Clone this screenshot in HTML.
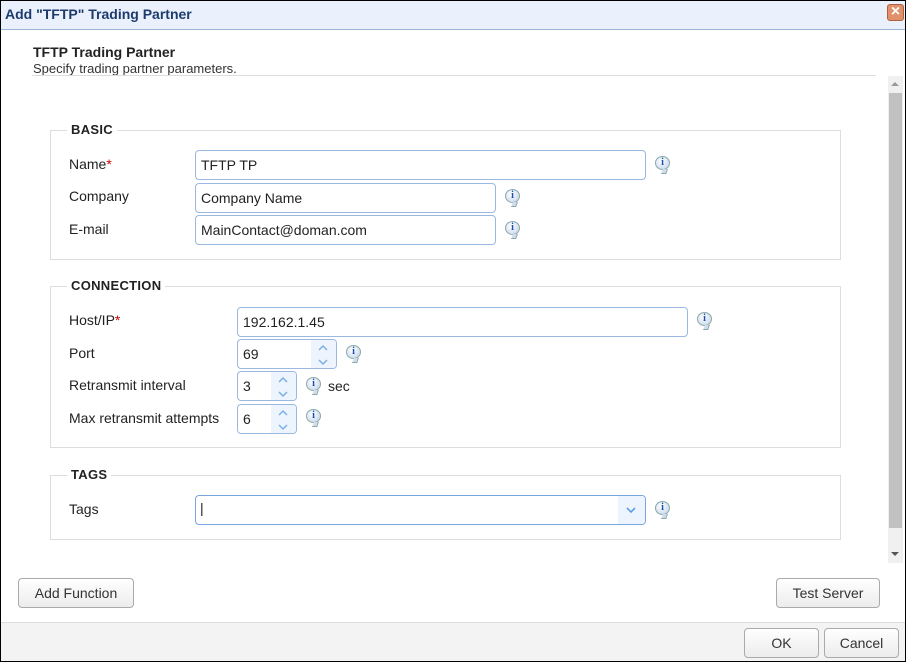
<!DOCTYPE html>
<html><head><style>
*{box-sizing:border-box;margin:0;padding:0}
body{width:906px;height:662px;position:relative;overflow:hidden;background:#fff;font-family:"Liberation Sans",Arial,sans-serif;font-size:14px;color:#222}
.a{position:absolute}
.title{left:0;top:0;width:906px;height:30px;background:#eaf1fd;border:1px solid #000;border-bottom:1px solid #9db4dc}
.title span{position:absolute;left:4px;top:5px;font-weight:bold;font-size:14px;color:#1d3b6b}
.close{left:887px;top:4px;width:17px;height:17px;background:#e0906a;border:1px solid #b0603e;border-radius:3px;color:#fff;font-weight:bold;font-size:16px;line-height:14px;text-align:center}
.frame{left:0;top:0;width:906px;height:662px;border:1px solid #000;pointer-events:none}
.fs{border:1px solid #ddd}
.leg{background:#fff;font-weight:bold;font-size:13px;padding:0 4px;letter-spacing:.3px}
.lbl{font-size:14px}
.req{color:#c00}
.inp{border:1px solid #9ab8e0;border-radius:4px;height:30px;padding:6px 5px;font-size:14px;background:#fff}
.spin{border:1px solid #9ab8e0;border-radius:4px;height:30px;background:#fff;overflow:hidden}
.spin .v{position:absolute;left:5px;top:6px}
.spin .b{position:absolute;right:0;top:0;width:25px;height:28px;background:#eef4fd}
.info{width:15px;height:14px;border-radius:50%;background:radial-gradient(circle at 40% 35%,#fff,#c0d0e8);border:1px solid #8aa;color:#1a4fb0;font:bold 10px "Liberation Serif",serif;text-align:center;line-height:12px}
.info:after{content:"";position:absolute;left:6px;top:12px;width:4px;height:4px;border-right:1px solid #8aa;border-bottom:1px solid #8aa;background:#d0dcec;transform:skewX(-20deg)}
.btn{border:1px solid #aaa;border-radius:4px;background:linear-gradient(#fff,#ececec);text-align:center;font-size:14px;color:#333;line-height:28px;height:30px}
</style></head><body>
<div class="a title"><span>Add "TFTP" Trading Partner</span></div>
<div class="a close">×</div>
<div class="a" style="left:33px;top:44px;font-weight:bold;font-size:14px">TFTP Trading Partner</div>
<div class="a" style="left:33px;top:61px;font-size:13px;color:#333">Specify trading partner parameters.</div>
<div class="a" style="left:32px;top:75px;width:844px;height:1px;background:#ddd"></div>

<div class="a" style="left:888px;top:76px;width:15px;height:487px;background:#f0f0f0"></div>
<div class="a" style="left:889px;top:93px;width:13px;height:435px;background:#c1c1c1"></div>
<div class="a" style="left:891px;top:82px;width:0;height:0;border:4px solid transparent;border-bottom:4px solid #999;border-top:0"></div>
<div class="a" style="left:891px;top:552px;width:0;height:0;border:4px solid transparent;border-top:4px solid #555;border-bottom:0"></div>

<div class="a fs" style="left:50px;top:130px;width:791px;height:130px"></div>
<div class="a leg" style="left:67px;top:122px">BASIC</div>
<div class="a lbl" style="left:69px;top:156px">Name<span class="req">*</span></div>
<div class="a inp" style="left:195px;top:150px;width:451px">TFTP TP</div>
<div class="a info" style="left:655px;top:156px">i</div>
<div class="a lbl" style="left:69px;top:188px">Company</div>
<div class="a inp" style="left:195px;top:183px;width:301px">Company Name</div>
<div class="a info" style="left:505px;top:189px">i</div>
<div class="a lbl" style="left:69px;top:221px">E-mail</div>
<div class="a inp" style="left:195px;top:215px;width:301px">MainContact@doman.com</div>
<div class="a info" style="left:505px;top:221px">i</div>

<div class="a fs" style="left:50px;top:286px;width:791px;height:162px"></div>
<div class="a leg" style="left:67px;top:278px">CONNECTION</div>
<div class="a lbl" style="left:69px;top:312px">Host/IP<span class="req">*</span></div>
<div class="a inp" style="left:237px;top:307px;width:451px">192.162.1.45</div>
<div class="a info" style="left:697px;top:312px">i</div>
<div class="a lbl" style="left:69px;top:345px">Port</div>
<div class="a spin" style="left:237px;top:339px;width:100px"><span class="v">69</span><div class="b"><svg width="25" height="28"><path d="M8 10l4-4 4 4M8 20l4 4 4-4" fill="none" stroke="#7ab0e8" stroke-width="1.5"/></svg></div></div>
<div class="a info" style="left:346px;top:345px">i</div>
<div class="a lbl" style="left:69px;top:377px">Retransmit interval</div>
<div class="a spin" style="left:237px;top:371px;width:60px"><span class="v">3</span><div class="b"><svg width="25" height="28"><path d="M8 10l4-4 4 4M8 20l4 4 4-4" fill="none" stroke="#7ab0e8" stroke-width="1.5"/></svg></div></div>
<div class="a info" style="left:306px;top:377px">i</div>
<div class="a lbl" style="left:328px;top:378px">sec</div>
<div class="a lbl" style="left:69px;top:410px">Max retransmit attempts</div>
<div class="a spin" style="left:237px;top:404px;width:60px"><span class="v">6</span><div class="b"><svg width="25" height="28"><path d="M8 10l4-4 4 4M8 20l4 4 4-4" fill="none" stroke="#7ab0e8" stroke-width="1.5"/></svg></div></div>
<div class="a info" style="left:306px;top:409px">i</div>

<div class="a fs" style="left:50px;top:475px;width:791px;height:65px"></div>
<div class="a leg" style="left:67px;top:467px">TAGS</div>
<div class="a lbl" style="left:69px;top:501px">Tags</div>
<div class="a spin" style="left:195px;top:495px;width:451px;border-color:#7aa6e0"><span class="v" style="left:4px;top:4px;font-weight:100">|</span><div class="b" style="width:27px"><svg width="27" height="28"><path d="M9 12l4 4 4-4" fill="none" stroke="#5a9ee8" stroke-width="1.6"/></svg></div></div>
<div class="a info" style="left:655px;top:501px">i</div>

<div class="a btn" style="left:18px;top:578px;width:116px">Add Function</div>
<div class="a btn" style="left:776px;top:578px;width:104px">Test Server</div>

<div class="a" style="left:0;top:622px;width:906px;height:40px;background:#f3f3f3;border-top:1px solid #ddd"></div>
<div class="a btn" style="left:744px;top:628px;width:75px">OK</div>
<div class="a btn" style="left:824px;top:628px;width:75px">Cancel</div>
<div class="a frame"></div>
</body></html>
